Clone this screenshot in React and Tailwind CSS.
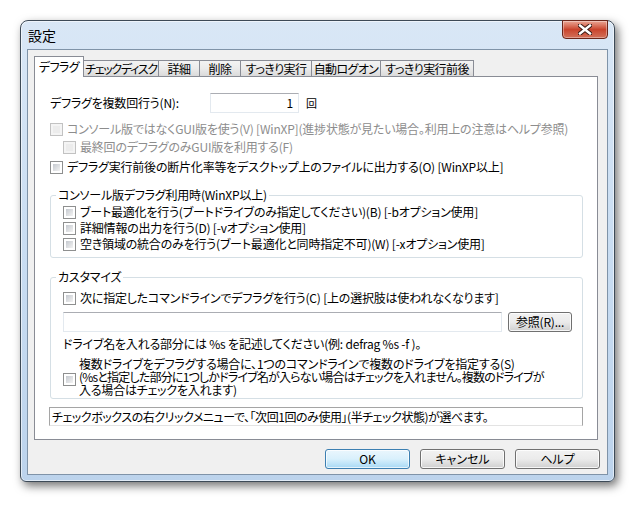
import React from 'react'

const TABS = [
  { label: 'デフラグ', w: 'w-[50px]', active: true },
  { label: 'チェックディスク', w: 'w-[76px] tracking-[-1.3px]' },
  { label: '詳細', w: 'w-[42px]' },
  { label: '削除', w: 'w-[42px]' },
  { label: 'すっきり実行', w: 'w-[72px]' },
  { label: '自動ログオン', w: 'w-[70px]' },
  { label: 'すっきり実行前後', w: 'w-[94px]' },
]

function Check({ disabled }) {
  return (
    <span
      className={`block w-[13px] h-[13px] shrink-0 border p-[2px] ${
        disabled ? 'border-[#c2c2c2] bg-[#f4f4f4]' : 'border-[#8e8f8f] bg-white'
      }`}
    >
      <span
        className={`block w-full h-full ${
          disabled
            ? 'bg-[#ececec]'
            : 'bg-gradient-to-br from-[#c5c9cf] to-[#f3f3f3]'
        }`}
      />
    </span>
  )
}

function CheckRow({ children, disabled, className = '' }) {
  return (
    <div className={`flex items-center gap-[4px] h-[16px] ${className}`}>
      <Check disabled={disabled} />
      <span className={`whitespace-nowrap ${disabled ? 'text-[#8d8d8d]' : 'text-black'}`}>
        {children}
      </span>
    </div>
  )
}

function Group({ title, className = '', children }) {
  return (
    <div className={`relative border border-[#d5dfe5] rounded-[3px] ${className}`}>
      <span className="absolute -top-[9px] left-[5px] bg-white px-[2px] leading-[16px] whitespace-nowrap">
        {title}
      </span>
      {children}
    </div>
  )
}

function Button({ children, primary, className = '' }) {
  return (
    <button
      className={`h-[20px] rounded-[3px] border text-[12px] leading-none ${
        primary
          ? 'border-[#3c7fb1] bg-gradient-to-b from-[#eaf6fd] via-[#d9f0fc] to-[#a7d9f5] shadow-[inset_0_0_0_1px_rgba(255,255,255,0.7)]'
          : 'border-[#707070] bg-gradient-to-b from-[#f2f2f2] via-[#ebebeb] to-[#cfcfcf] shadow-[inset_0_0_0_1px_rgba(255,255,255,0.8)]'
      } ${className}`}
    >
      {children}
    </button>
  )
}

export default function App() {
  return (
    <div className="min-h-[505px] bg-white pl-[20px] pt-[20px] font-['Noto_Sans_CJK_JP',sans-serif] [font-feature-settings:'palt'] text-[12px] tracking-[-0.2px] text-black">
      {/* window frame */}
      <div className="w-[595px] h-[462px] flex flex-col rounded-t-[8px] rounded-b-[6px] border border-[#3d4a57] bg-gradient-to-b from-[#d9e7f6] via-[#c9ddf2] to-[#bcd3ec] px-[6px] pb-[6px] shadow-[inset_0_0_0_1px_rgba(255,255,255,0.55),3px_4px_10px_rgba(0,0,0,0.55)]">
        {/* title bar */}
        <div className="h-[28px] flex items-start justify-between shrink-0">
          <span className="pt-[6px] pl-[1px] text-[14px] leading-[16px] tracking-normal text-black">設定</span>
          <div className="w-[46px] h-[19px] -mt-px rounded-b-[4px] border border-[#6b2519] bg-gradient-to-b from-[#e9a594] via-[#c9432c] to-[#d2705a] flex items-center justify-center shadow-[inset_0_0_0_1px_rgba(255,255,255,0.35)]">
            <svg width="14" height="11" viewBox="0 0 14 11">
              <path d="M2 1.5 L12 9.5 M12 1.5 L2 9.5" stroke="#3a1a14" strokeWidth="4.4" strokeLinecap="square" />
              <path d="M2 1.5 L12 9.5 M12 1.5 L2 9.5" stroke="#ffffff" strokeWidth="2.4" strokeLinecap="square" />
            </svg>
          </div>
        </div>

        {/* client area */}
        <div className="flex-1 border border-[#7f93a8] bg-[#f0f0f0] px-[6px] pt-[6px] flex flex-col">
          {/* tab control */}
          <div className="w-[564px]">
            <div className="flex items-end h-[20px] tracking-[-0.6px]">
              {TABS.map((t) =>
                t.active ? (
                  <div
                    key={t.label}
                    className={`${t.w} h-[21px] -mb-px relative z-10 bg-white border border-b-0 border-[#898c95] flex items-center justify-center whitespace-nowrap leading-none`}
                  >
                    {t.label}
                  </div>
                ) : (
                  <div
                    key={t.label}
                    className={`${t.w} h-[16px] -ml-px first:ml-0 border border-b-0 border-[#898c95] bg-gradient-to-b from-[#f3f3f3] via-[#ebebeb] to-[#dadada] flex items-center justify-center whitespace-nowrap leading-none`}
                  >
                    {t.label}
                  </div>
                )
              )}
            </div>
            <div className="h-[364px] border border-[#898c95] bg-white pl-[15px] pr-[14px] pt-[16px]">
              {/* repeat count */}
              <div className="flex items-center h-[20px]">
                <span className="w-[160px] whitespace-nowrap">デフラグを複数回行う(N):</span>
                <div className="w-[89px] h-[20px] border border-[#e3e9ef] border-t-[#abadb3] flex items-center justify-end pr-[5px]">
                  1
                </div>
                <span className="ml-[7px] text-[11px]">回</span>
              </div>

              <CheckRow disabled className="mt-[8px]">
                コンソール版ではなくGUI版を使う(V) [WinXP](進捗状態が見たい場合。利用上の注意はヘルプ参照)
              </CheckRow>
              <CheckRow disabled className="mt-[2px] ml-[13px]">
                最終回のデフラグのみGUI版を利用する(F)
              </CheckRow>
              <CheckRow className="mt-[4px]">
                デフラグ実行前後の断片化率等をデスクトップ上のファイルに出力する(O) [WinXP以上]
              </CheckRow>

              <Group title="コンソール版デフラグ利用時(WinXP以上)" className="mt-[20px] h-[63px] pl-[12px] pt-[8px]">
                <CheckRow>ブート最適化を行う(ブートドライブのみ指定してください)(B) [-bオプション使用]</CheckRow>
                <CheckRow>詳細情報の出力を行う(D) [-vオプション使用]</CheckRow>
                <CheckRow>空き領域の統合のみを行う(ブート最適化と同時指定不可)(W) [-xオプション使用]</CheckRow>
              </Group>

              <Group title="カスタマイズ" className="mt-[19px] h-[122px] pl-[12px] pt-[12px]">
                <CheckRow>次に指定したコマンドラインでデフラグを行う(C) [上の選択肢は使われなくなります]</CheckRow>
                <div className="mt-[6px] flex items-start gap-[6px]">
                  <div className="w-[439px] h-[20px] border border-[#e3e9ef] border-t-[#abadb3]" />
                  <Button className="w-[64px] h-[19px]">参照(R)...</Button>
                </div>
                <div className="mt-[4px] h-[16px] leading-[16px] whitespace-nowrap">
                  ドライブ名を入れる部分には %s を記述してください(例: defrag %s -f )。
                </div>
                <div className="mt-[5px] flex items-start gap-[3px]">
                  <span className="mt-[16px]">
                    <Check />
                  </span>
                  <div className="leading-[13px] whitespace-nowrap">
                    <div>複数ドライブをデフラグする場合に、1つのコマンドラインで複数のドライブを指定する(S)</div>
                    <div className="tracking-[-0.8px]">(%sと指定した部分に1つしかドライブ名が入らない場合はチェックを入れません。複数のドライブが</div>
                    <div>入る場合はチェックを入れます)</div>
                  </div>
                </div>
              </Group>

              <div className="mt-[8px] -ml-px w-[534px] h-[19px] border border-[#a5a5a5] border-b-[#e3e3e3] pl-[2px] leading-[17px] whitespace-nowrap tracking-[-0.45px]">
                チェックボックスの右クリックメニューで、「次回1回のみ使用」(半チェック状態)が選べます。
              </div>
            </div>
          </div>

          {/* dialog buttons */}
          <div className="mt-[9px] flex justify-end gap-[10px] pr-[1px] tracking-normal">
            <Button primary className="w-[85px]">OK</Button>
            <Button className="w-[85px]">キャンセル</Button>
            <Button className="w-[85px]">ヘルプ</Button>
          </div>
        </div>
      </div>
    </div>
  )
}
